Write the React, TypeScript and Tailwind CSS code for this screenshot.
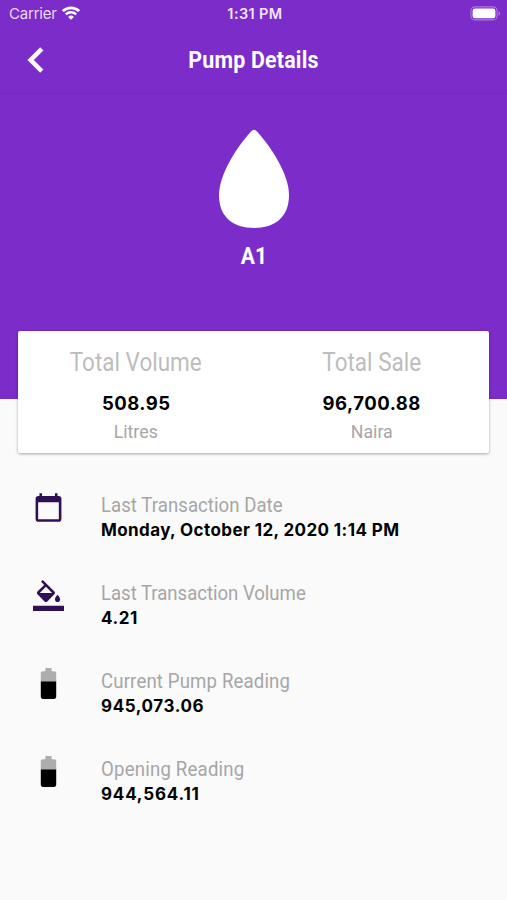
import type { ReactNode } from 'react';
import { MdCalendarToday } from 'react-icons/md';

const totals = [
  { title: 'Total Volume', value: '508.95', unit: 'Litres' },
  { title: 'Total Sale', value: '96,700.88', unit: 'Naira' },
];

function BackIcon() {
  return (
    <svg viewBox="0 0 24 24" className="ml-[11px] size-[50px]" fill="white" stroke="white" strokeWidth=".2">
      <path d="M15.41 7.41 14 6l-6 6 6 6 1.41-1.41L10.83 12z" />
    </svg>
  );
}

function WifiIcon() {
  return (
    <svg viewBox="0 0 18 14" className="-mt-px h-[14px] w-[18px]" fill="none" stroke="white">
      <path d="M.9 5.1a11.7 11.7 0 0 1 16.2 0" strokeWidth="2.7" />
      <path d="M3.8 8.3a7.5 7.5 0 0 1 10.4 0" strokeWidth="2.4" />
      <path d="M9 13.8 6.1 10.9a4.1 4.1 0 0 1 5.8 0z" fill="white" stroke="none" />
    </svg>
  );
}

function PhoneBattery() {
  return (
    <svg viewBox="0 0 31 15" className="h-[15px] w-[31px]">
      <rect x=".9" y=".9" width="26.2" height="13" rx="4" fill="none" stroke="#b07bdf" strokeWidth="1.1" />
      <rect x="2.6" y="2.6" width="22.8" height="9.6" rx="2.3" fill="white" />
      <path d="M28.6 5.2c2 .8 2 3.7 0 4.5z" fill="#b07bdf" />
    </svg>
  );
}

function FillIcon() {
  return (
    <svg viewBox="0 0 24 24" className="size-[31px]" fill="#301055">
      <path d="M16.56 8.94 7.62 0 6.21 1.41l2.38 2.38-5.15 5.15c-.59.59-.59 1.54 0 2.12l5.5 5.5c.29.29.68.44 1.06.44s.77-.15 1.06-.44l5.5-5.5c.59-.58.59-1.53 0-2.12zM5.21 10 10 5.21 14.79 10H5.21zM19 11.5s-2 2.17-2 3.5c0 1.1.9 2 2 2s2-.9 2-2c0-1.33-2-3.5-2-3.5zM0 20h24v4H0v-4z" />
    </svg>
  );
}

function PumpReadingIcon() {
  return (
    <svg viewBox="0 0 24 24" className="size-[37px] shrink-0">
      <path fill="#adadad" d="M17 5.33C17 4.6 16.4 4 15.67 4H14V2h-4v2H8.33C7.6 4 7 4.6 7 5.33V11h10V5.33z" />
      <path d="M7 10.7v9.97C7 21.4 7.6 22 8.33 22h7.33c.74 0 1.34-.6 1.34-1.33V10.7H7z" />
    </svg>
  );
}

function DetailRow({ icon, label, value, labelClass, valueClass }: {
  icon: ReactNode;
  label: string;
  value: string;
  labelClass: string;
  valueClass: string;
}) {
  return (
    <div className="flex h-[88px] items-start">
      <div className="flex h-[37px] w-[60px] shrink-0 items-center justify-center">{icon}</div>
      <div className="ml-[23px] pt-[3px] whitespace-nowrap">
        <div className={`origin-left scale-x-[0.93] font-['Roboto',sans-serif] text-[20px] leading-[26px] text-[#a6a6a6] ${labelClass}`}>{label}</div>
        <div className={`text-[17px] leading-6 font-bold text-black ${valueClass}`}>{value}</div>
      </div>
    </div>
  );
}

export default function App() {
  return (
    <div className="h-[900px] w-[507px] overflow-hidden bg-[#fafafa] font-['Inter',sans-serif]">
      <header className="h-[399px] bg-[#7b2cc9] text-white">
        <div className="grid h-[27px] grid-cols-3 items-center pr-[6px] pl-[9px]">
          <div className="flex items-center text-[15px] text-[#ead9f8]">
            <span className="w-[53px] pt-[2px] tracking-[-0.2px]">Carrier</span>
            <WifiIcon />
          </div>
          <div className="pt-px text-center text-[14.5px] font-semibold tracking-[0.4px] text-[#f1e5fb]">1:31 PM</div>
          <div className="flex justify-end"><PhoneBattery /></div>
        </div>

        <div className="grid h-[67px] grid-cols-[100px_1fr_100px] items-center border-b border-[#7427bd]">
          <BackIcon />
          <h1 className="scale-x-[0.93] pt-[2px] text-center font-['Roboto',sans-serif] text-[23px] font-bold tracking-[0.2px]">Pump Details</h1>
        </div>

        <div className="flex flex-col items-center pt-[35px]">
          <svg viewBox="0 0 70 100" className="h-[100px] w-[70px]" fill="white">
            <path d="M32 2.5C34 .3 36 .3 38 2.5C53 19 70 46 70 66C70 88 56 99 35 99C14 99 0 88 0 66C0 46 17 19 32 2.5Z" />
          </svg>
          <div className="mt-[11px] scale-x-[0.88] font-['Roboto',sans-serif] text-[24px] leading-8 font-bold">A1</div>
        </div>
      </header>

      <section className="relative mx-[18px] -mt-[68px] grid h-[122px] grid-cols-2 rounded-[2px] bg-white text-center shadow-[0_1px_3px_rgba(0,0,0,0.35)]">
        {totals.map((t) => (
          <div key={t.title} className="pt-4">
            <div className="scale-x-[0.9] font-['Roboto',sans-serif] text-[25px] leading-8 text-[#bdbdbd]">{t.title}</div>
            <div className="mt-[11px] pl-px text-[18.5px] leading-[26px] font-bold tracking-[0.5px] text-black">{t.value}</div>
            <div className="mt-1 scale-x-[0.96] font-['Roboto',sans-serif] text-[18.5px] leading-6 text-[#a6a6a6]">{t.unit}</div>
          </div>
        ))}
      </section>

      <main className="pt-[36px] pl-[18px]">
        <DetailRow
          icon={<MdCalendarToday className="size-[31px] text-[#301055]" />}
          label="Last Transaction Date"
          value="Monday, October 12, 2020 1:14 PM"
          labelClass="tracking-[0.05px]"
          valueClass="tracking-[0.4px]"
        />
        <DetailRow
          icon={<FillIcon />}
          label="Last Transaction Volume"
          value="4.21"
          labelClass="-tracking-[0.03px]"
          valueClass="tracking-[0.6px]"
        />
        <DetailRow icon={<PumpReadingIcon />} label="Current Pump Reading" value="945,073.06" labelClass="tracking-[0.16px]" valueClass="tracking-[0.6px]" />
        <DetailRow icon={<PumpReadingIcon />} label="Opening Reading" value="944,564.11" labelClass="tracking-[0.22px]" valueClass="tracking-[0.8px]" />
      </main>
    </div>
  );
}
